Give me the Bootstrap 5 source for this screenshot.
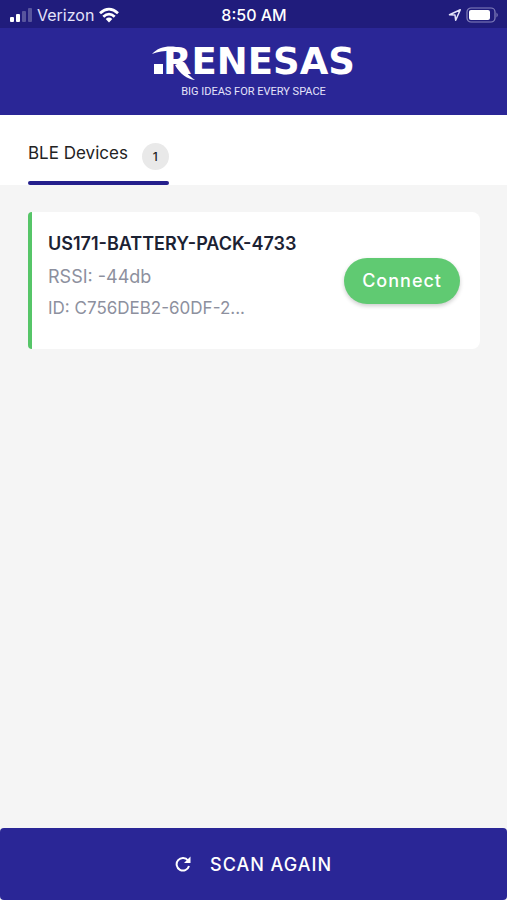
<!DOCTYPE html>
<html lang="en">
<head>
<meta charset="utf-8">
<meta name="viewport" content="width=device-width, initial-scale=1">
<title>BLE Devices</title>
<link href="https://cdn.jsdelivr.net/npm/bootstrap@5.3.0/dist/css/bootstrap.min.css" rel="stylesheet">
<style>
  body { font-family: Inter, "Liberation Sans", sans-serif; background: #f5f5f5; color: #222; }
  .status-bar { background: #201c7c; color: #e4e3fa; height: 28px; font-size: 16px; line-height: 28px; padding: 2px 8px 0 9px; }
  .status-side { flex: 1 1 0; }
  .clock { color: #fff; font-weight: 500; }
  .brand-bar { background: #2a2696; color: #fff; padding: 10px 0 15px; }
  .brand-word { font: bold 37px "DejaVu Sans", sans-serif; }
  .tagline { font: 11px/16px Roboto, "Liberation Sans", sans-serif; color: #e4e3fa; }
  .tab-bar { padding: 0 28px; height: 70px; }
  .tab-link { color: #222; font-size: 17px; line-height: 24px; padding: 26px 0 0; gap: 14px; }
  .tab-link:hover { color: #222; }
  .tab-line { height: 4px; background: #241f8c; margin-top: 11px; }
  .count { width: 27px; height: 27px; background: #e9e9e9; color: #222; font-size: 12px; font-weight: 500; margin-top: 2px; }
  .device-list { padding: 27px 27px 27px 28px; }
  .device { background: #fff; border-left: 4px solid #56c568; border-radius: 4px 8px 8px 4px; padding: 18px 20px 18px 16px; }
  .device-info { padding: 1px 0 4px; }
  .device h2 { color: #1c2233; font-size: 18px; line-height: 26px; font-weight: 600; margin-bottom: 8px; }
  .device p { color: #8d909e; line-height: 24px; margin-bottom: 7px; }
  .signal { font-size: 18px; }
  .ident { font-size: 17px; }
  .connect { background: #60ca72; color: #fff; font-size: 18px; font-weight: 500; letter-spacing: 1px; line-height: 24px; padding: 11px 18px; box-shadow: 0 2px 4px #0003; }
  .connect:hover { background: #56c568; color: #fff; }
  .scan { background: #2a2696; color: #fff; font-size: 18px; font-weight: 500; letter-spacing: 1px; height: 72px; border: 0; border-radius: 4px; gap: 19px; }
  .scan:hover { background: #241f8c; color: #fff; }
</style>
</head>
<body class="d-flex flex-column min-vh-100">
<div class="status-bar d-flex align-items-center">
  <div class="status-side d-flex align-items-center">
    <svg width="24" height="14" viewBox="0 0 24 14" aria-hidden="true"><g fill="#fff"><rect x="1" y="9" width="4" height="5" rx="1"/><rect x="7" y="6" width="4" height="8" rx="1"/><g opacity=".25"><rect x="13" y="3" width="4" height="11" rx="1"/><rect x="19" y="0" width="4" height="14" rx="1"/></g></g></svg>
    <span class="ms-1 me-1">Verizon</span>
    <svg width="22" height="16" viewBox="0 0 22 16" aria-hidden="true"><g fill="none" stroke="#fff" stroke-width="2.8"><path d="M2 6.2Q11-1.900 20 6.200"/><path d="M5.300 9.700Q11 4.500 16.700 9.700"/></g><path d="M7.700 12Q11 9.200 14.300 12L11 15.500Z" fill="#fff"/></svg>
  </div>
  <div class="clock">8:50 AM</div>
  <div class="status-side d-flex align-items-center justify-content-end gap-1">
    <svg width="14" height="14" viewBox="0 0 14 14" aria-hidden="true"><path d="M1.500 6.700 12.300 1.700 7.700 12.300 7 7Z" fill="none" stroke="#e4e3fa" stroke-width="1.500" stroke-linejoin="round"/></svg>
    <svg width="33" height="16" viewBox="0 0 33 16" aria-hidden="true"><rect x="1" y="1" width="28" height="14" rx="4" fill="none" stroke="#8582bd" stroke-width="1.200"/><rect x="3" y="3" width="21" height="10" rx="2" fill="#fff"/><path d="M30.500 5.500Q33 8 30.500 10.500Z" fill="#8582bd"/></svg>
  </div>
</div>
<header class="brand-bar text-center">
  <svg class="d-block mx-auto" width="204" height="46" viewBox="0 -8 204 46" role="img" aria-label="Renesas">
    <rect x="2" y="18" width="9" height="10" fill="#fff"/>
    <path d="M0 8C7 0 18-1 30 2C26 6 12 3 0 8Z" fill="#fff"/>
    <path d="M28 17C32 25 36 29 43 34C35 33 28 28 23 19Z" fill="#fff"/>
    <text class="brand-word" x="11" y="28" fill="#fff">RENESAS</text>
  </svg>
  <div class="tagline">BIG IDEAS FOR EVERY SPACE</div>
</header>
<nav class="tab-bar bg-white d-flex align-items-end" aria-label="Device types">
  <a class="text-decoration-none" href="#devices" aria-current="page">
    <span class="tab-link d-flex align-items-start">BLE Devices <span class="count rounded-circle d-flex align-items-center justify-content-center">1</span></span>
    <span class="tab-line d-block rounded-pill"></span>
  </a>
</nav>
<main class="device-list flex-grow-1" id="devices">
  <article class="device d-flex align-items-center justify-content-between">
    <div class="device-info">
      <h2>US171-BATTERY-PACK-4733</h2>
      <p class="signal">RSSI: -44db</p>
      <p class="ident">ID: C756DEB2-60DF-2...</p>
    </div>
    <button type="button" class="connect btn border-0 rounded-pill">Connect</button>
  </article>
</main>
<footer>
  <button type="button" class="scan btn w-100 d-flex align-items-center justify-content-center">
    <svg width="16" height="16" viewBox="0 0 16 16" aria-hidden="true"><path d="M13 4.500A6.300 6.300 0 1 0 14 10" fill="none" stroke="#fff" stroke-width="2"/><path d="M15.500 0.500V7H9Z" fill="#fff"/></svg>
    SCAN AGAIN
  </button>
</footer>
<script src="https://cdn.jsdelivr.net/npm/bootstrap@5.3.0/dist/js/bootstrap.bundle.min.js"></script>
</body>
</html>
